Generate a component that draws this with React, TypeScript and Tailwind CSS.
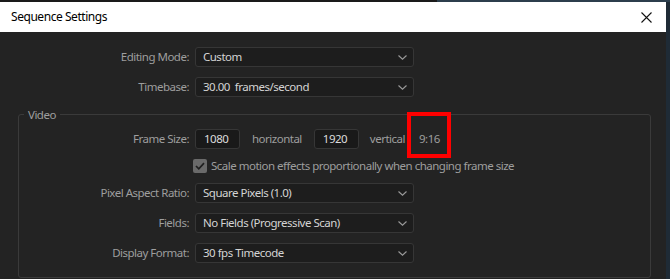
import type { ReactNode } from 'react'

const FONT = { fontFamily: '"Noto Sans", "Open Sans", sans-serif' }

function Chevron() {
  return (
    <svg width="9" height="5" viewBox="0 0 9 5" className="shrink-0">
      <path d="M0.5 0.5 L4.5 4.2 L8.5 0.5" fill="none" stroke="#9a9a9a" strokeWidth="1.1" />
    </svg>
  )
}

function Select({ value }: { value: string }) {
  return (
    <div className="flex h-[20px] w-[219px] items-center justify-between rounded-[3px] border border-[#363636] bg-[#1d1d1d] pl-[7px] pr-[6px] text-[#d4d4d4]">
      <span className="whitespace-pre">{value}</span>
      <Chevron />
    </div>
  )
}

function Row({ label, labelW, children }: { label: string; labelW: string; children: ReactNode }) {
  return (
    <div className="flex h-[20px] items-center">
      <div className={`${labelW} shrink-0 pr-[6px] text-right text-[#9e9e9e]`}>{label}</div>
      {children}
    </div>
  )
}

export default function App() {
  return (
    <div
      className="relative h-[279px] w-[670px] overflow-hidden bg-[#1f2b36] text-[11.5px] tracking-[-0.5px]"
      style={FONT}
    >
      {/* window strip behind the dialog */}
      <div className="flex h-[2px]">
        <div className="w-[437px] bg-[#1a1a1a]" />
        <div className="flex-1 bg-[#2c3e4c]" />
      </div>

      <div className="w-[666px]">
        {/* title bar */}
        <div className="flex h-[30px] items-center justify-between bg-white pl-[11px] pr-[14px]">
          <span className="text-[12px] tracking-[-0.45px] text-black">Sequence Settings</span>
          <svg width="11" height="11" viewBox="0 0 11 11">
            <path d="M0.5 0.5 L10.5 10.5 M10.5 0.5 L0.5 10.5" stroke="#111" strokeWidth="1.1" />
          </svg>
        </div>

        {/* body */}
        <div className="h-[247px] bg-[#232323] pt-[15px]">
          <div className="flex flex-col gap-[10px]">
            <Row label="Editing Mode:" labelW="w-[195px]">
              <Select value="Custom" />
            </Row>
            <Row label="Timebase:" labelW="w-[195px]">
              <Select value="30.00  frames/second" />
            </Row>
          </div>

          {/* Video group */}
          <div className="relative ml-[18px] mt-[17px] h-[164px] w-[633px] rounded-[3px] border border-[#3a3a3a] pt-[14px]">
            <div className="absolute -top-[9px] left-[5px] bg-[#232323] px-[4px] text-[#9e9e9e]">Video</div>

            <Row label="Frame Size:" labelW="w-[176px]">
              <div className="flex h-[20px] w-[45px] items-center rounded-[3px] border border-[#363636] bg-[#191919] pl-[8px] text-[#dcdcdc]">
                1080
              </div>
              <span className="ml-[12px] text-[#9e9e9e]">horizontal</span>
              <div className="ml-[12px] flex h-[20px] w-[45px] items-center rounded-[3px] border border-[#363636] bg-[#191919] pl-[8px] text-[#dcdcdc]">
                1920
              </div>
              <span className="ml-[11px] text-[#9e9e9e]">vertical</span>
              <span className="ml-[14px] text-[#9e9e9e]">9:16</span>
            </Row>

            <div className="mt-[10px] flex h-[14px] items-center pl-[174px]">
              <div className="flex h-[14px] w-[14px] items-center justify-center rounded-[2px] bg-[#6a6a6a]">
                <svg width="10" height="8" viewBox="0 0 10 8">
                  <path d="M1 4 L3.8 6.8 L9 1.2" fill="none" stroke="#1f1f1f" strokeWidth="1.7" />
                </svg>
              </div>
              <span className="ml-[4px] text-[#9e9e9e]">Scale motion effects proportionally when changing frame size</span>
            </div>

            <div className="mt-[10px] flex flex-col gap-[10px]">
              <Row label="Pixel Aspect Ratio:" labelW="w-[176px]">
                <Select value="Square Pixels (1.0)" />
              </Row>
              <Row label="Fields:" labelW="w-[176px]">
                <Select value="No Fields (Progressive Scan)" />
              </Row>
              <Row label="Display Format:" labelW="w-[176px]">
                <Select value="30 fps Timecode" />
              </Row>
            </div>
          </div>
        </div>
      </div>

      {/* red annotation box */}
      <div className="absolute left-[407px] top-[112px] h-[46px] w-[44px] border-[4px] border-[#ff0000]" />
    </div>
  )
}
